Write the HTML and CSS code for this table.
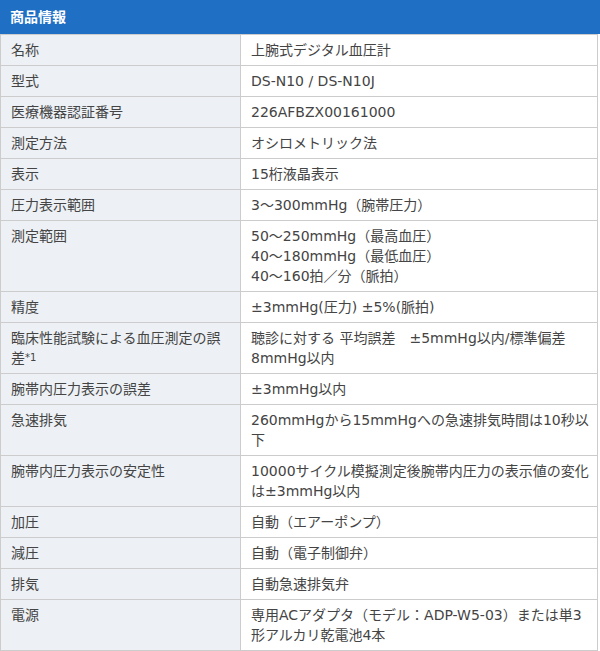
FILE: index.html
```html
<!DOCTYPE html>
<html lang="ja">
<head>
<meta charset="utf-8">
<title>商品情報</title>
<link rel="stylesheet" href="styles.css">
</head>
<body>
<div class="spec">
  <div class="spec-head">商品情報</div>
  <table class="spec-table">
    <colgroup><col class="col-key"><col class="col-val"></colgroup>
    <tbody>
      <tr><th>名称</th><td>上腕式デジタル血圧計</td></tr>
      <tr><th>型式</th><td>DS-N10 / DS-N10J</td></tr>
      <tr><th>医療機器認証番号</th><td>226AFBZX00161000</td></tr>
      <tr><th>測定方法</th><td>オシロメトリック法</td></tr>
      <tr><th>表示</th><td>15桁液晶表示</td></tr>
      <tr><th>圧力表示範囲</th><td>3～300mmHg（腕帯圧力）</td></tr>
      <tr><th>測定範囲</th><td>50～250mmHg（最高血圧）<br>40～180mmHg（最低血圧）<br>40～160拍／分（脈拍）</td></tr>
      <tr><th>精度</th><td>±3mmHg(圧力) ±5%(脈拍)</td></tr>
      <tr><th>臨床性能試験による血圧測定の誤<br>差<span class="note">*1</span></th><td>聴診に対する 平均誤差　±5mmHg以内/標準偏差<br>8mmHg以内</td></tr>
      <tr><th>腕帯内圧力表示の誤差</th><td>±3mmHg以内</td></tr>
      <tr><th>急速排気</th><td>260mmHgから15mmHgへの急速排気時間は10秒以<br>下</td></tr>
      <tr><th>腕帯内圧力表示の安定性</th><td>10000サイクル模擬測定後腕帯内圧力の表示値の変化<br>は±3mmHg以内</td></tr>
      <tr><th>加圧</th><td>自動（エアーポンプ）</td></tr>
      <tr><th>減圧</th><td>自動（電子制御弁）</td></tr>
      <tr><th>排気</th><td>自動急速排気弁</td></tr>
      <tr><th>電源</th><td>専用ACアダプタ（モデル：ADP-W5-03）または単3<br>形アルカリ乾電池4本</td></tr>
    </tbody>
  </table>
</div>
</body>
</html>
```

FILE: styles.css
```css
html, body {
  margin: 0;
  padding: 0;
  background: #ffffff;
}

body {
  font-family: "DejaVu Sans", "Noto Sans CJK JP", sans-serif;
  font-size: 14px;
  color: #444444;
}

.spec {
  width: 600px;
}

.spec-head {
  height: 34px;
  line-height: 33px;
  padding: 0 10px;
  background: #1f6fc5;
  color: #ffffff;
  font-weight: bold;
  font-family: "Noto Sans CJK JP", sans-serif;
}

.spec-table {
  width: 598px;
  border-collapse: collapse;
  table-layout: fixed;
}

.col-key {
  width: 240px;
}

.spec-table th,
.spec-table td {
  border: 1px solid #cccccc;
  padding: 5px 10px;
  line-height: 20px;
  text-align: left;
  vertical-align: top;
  font-weight: normal;
  white-space: nowrap;
}

.spec-table th {
  background: #edf1f5;
}

.spec-table td {
  background: #ffffff;
}

.note {
  font-size: 10px;
  vertical-align: 2px;
}
```
